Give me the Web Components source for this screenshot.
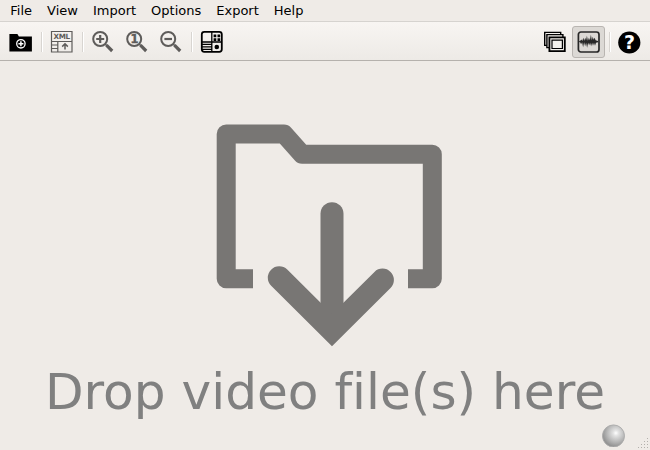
<!DOCTYPE html>
<html lang="en">
<head>
<meta charset="utf-8">
<title>Video drop window</title>
<style>
html,body{margin:0;width:650px;height:450px;overflow:hidden;background:#efebe7;font-family:"DejaVu Sans",sans-serif}
</style>
</head>
<body>
<app-window></app-window>
<script>
const define = (name, html) => customElements.define(name, class extends HTMLElement {
  constructor() {
    super();
    this.attachShadow({mode: 'open'}).innerHTML = html;
  }
});

const icons = {
  folder: `<path d="M.4 4h8l1.5 2.4h13v15.2H.4z" fill="#000"/><circle cx="11.9" cy="13.8" r="4.2" fill="none" stroke="#fff" stroke-width="1.3"/><path d="M11.9 11.3v5M9.4 13.8h5" stroke="#fff" stroke-width="1.5"/>`,
  xml: `<g fill="none" stroke="#5e5c5a" stroke-width="1.2"><path d="M1.5 1.5h20.5v20.5h-20.5zM1.5 11.5h20.5M7.8 11.5v10.5M1.5 15h6.3M1.5 18.5h6.3"/><path d="M15 19.5v-5.5M12.2 16.6l2.8-2.8 2.8 2.8" stroke-width="1.5"/></g><text x="11.8" y="9.3" text-anchor="middle" textLength="16.6" lengthAdjust="spacing" font-family="DejaVu Sans" font-weight="bold" font-size="7.2" fill="#5e5c5a">XML</text>`,
  lens: `<circle cx="9.2" cy="9" r="7" fill="none" stroke="#5e5c5a" stroke-width="2"/><path d="M14.1 14l2 2" stroke="#5e5c5a" stroke-width="1.6"/><path d="M15.4 15.2l5.8 5.8" stroke="#5e5c5a" stroke-width="3.2"/>`,
  panel: `<rect x="1.8" y="1.8" width="20" height="20" rx="2.5" fill="none" stroke="#000" stroke-width="1.8"/><path d="M11.8 2v20M2 12h20" stroke="#000" stroke-width="1.3"/><path d="M2 14.4h10M2 16.8h10M2 19.3h10" stroke="#000" stroke-width="1.2"/><path d="M13.6 4.6h2.7v2.7h-2.7zM17.5 4.6h2.7v2.7h-2.7zM13.6 8.3h2.7V11h-2.7zM17.5 8.3h2.7V11h-2.7z"/><circle cx="16.8" cy="17" r="2.3"/>`,
  stack: `<g fill="#f4f1ed" stroke="#000" stroke-width="1.4"><path d="M1.7 2.4h16v13h-16z"/><path d="M3.9 4.6h16v13h-16z"/><path d="M6.4 7.4h15.4v13.7H6.4z" stroke-width="1.8"/><path d="M9 10.1h10.4v8.4H9z" stroke-width="1.2"/></g>`,
  wave: `<rect x="1.4" y="2" width="20.6" height="20" rx="2.5" fill="none" stroke="#272727" stroke-width="1.7"/><path d="M2 11.5l1.5-1 1-1 .8 1.5 1-3.3.9 3 1-3 .9 2.5.8-4.5 1 5 1-3 1 2.5 1-5.5.9 5.5 1-3.5.8 3 1-2 1 2.5 2.4.8v1.2l-2 .6-1 3-1-3-1 3-.9-3-1 3.5-1-3.5-1 2.5-1-2.5-1 5-1-5-1 3.5-1-4-1 5-1-5-1 2-1-2-1.5-.3z" fill="#272727"/>`,
  help: `<circle cx="11.3" cy="12.5" r="11.1"/><text x="11.4" y="19.4" text-anchor="middle" font-family="DejaVu Sans" font-weight="bold" font-size="19" fill="#fff">?</text>`
};
const sign = {
  zoomin: `<path d="M9.2 5v8M5.2 9h8" stroke="#5e5c5a" stroke-width="2.2"/>`,
  zoomone: `<text x="9.4" y="13.2" text-anchor="middle" font-family="DejaVu Sans" font-weight="bold" font-size="11.5" fill="#5e5c5a" stroke="#5e5c5a" stroke-width=".4">1</text>`,
  zoomout: `<path d="M5.4 9h7.6" stroke="#5e5c5a" stroke-width="2.2"/>`
};
for (const k in sign) icons[k] = icons.lens + sign[k];

customElements.define('tool-button', class extends HTMLElement {
  connectedCallback() {
    this.attachShadow({mode: 'open'}).innerHTML = `<style>
      :host{display:flex;box-sizing:border-box;width:34px;height:34px;align-items:center;justify-content:center}
      :host([pressed]) div{background:#dcd9d5;border-color:#b9b5b1}
      div{box-sizing:border-box;width:33px;height:32px;border:1px solid transparent;border-radius:3px;display:flex;align-items:center;justify-content:center}
      :host([pressed]){justify-content:flex-start}
      svg{display:block;flex:none;width:24px;height:24px}
    </style><div><svg viewBox="0 0 24 24">${icons[this.getAttribute('icon')]}</svg></div>`;
  }
});
define('tool-separator', `<style>:host{display:block;width:7px;height:20px}i{display:block;width:1px;height:100%;margin-left:3px;background:#d8d5d1;box-shadow:1px 0 #fff}</style><i></i>`);
define('tool-bar', `<style>
  :host{display:flex;box-sizing:border-box;height:40px;padding:2px 3px 0 4px;align-items:center;border-top:1px solid #d6d3cf;border-bottom:1px solid #b5b1ad;background:linear-gradient(#f8f5f2,#edeae6)}
  .gap{flex:1}</style><slot></slot><div class="gap"></div><slot name="end"></slot>`);
define('menu-item', `<style>:host{display:block;font-size:13px;line-height:21px;color:#000}</style><slot></slot>`);
define('menu-bar', `<style>:host{display:flex;box-sizing:border-box;height:21px;padding-left:10.3px;gap:15px}</style><slot></slot>`);
define('drop-area', `<style>
  :host{display:flex;flex:1;flex-direction:column;align-items:center;position:relative}
  svg{display:block;width:260px;height:250px;margin:49px 0 0 10px}
  p{margin:0;font-size:50.15px;line-height:64px;color:#808080;white-space:nowrap;font-variant-ligatures:none}
  </style>
  <svg viewBox="200 110 260 250">
    <path d="M253 278.8H226.2V134H284L302 154.2H432.3V278.8H408" fill="none" stroke="#787674" stroke-width="19" stroke-linejoin="round"/>
    <path d="M332 213.7V320" stroke="#787674" stroke-width="23" stroke-linecap="round"/>
    <path d="M279.2 277.7L332 330.2L382.5 280" fill="none" stroke="#787674" stroke-width="22.8" stroke-linecap="round" stroke-linejoin="miter"/>
  </svg><p><slot></slot></p>`);
define('status-light', `<style>:host{display:block;width:23px;height:23px}svg{display:block}</style>
  <svg width="23" height="23" viewBox="0 0 23 23"><defs><radialGradient id="g" cx=".61" cy=".37" r=".68"><stop offset="0" stop-color="#fff"/><stop offset=".18" stop-color="#e3e3e3"/><stop offset=".55" stop-color="#bbb"/><stop offset="1" stop-color="#888"/></radialGradient></defs><circle cx="11.5" cy="11.9" r="11" fill="url(#g)" stroke="#aaa" stroke-width=".9"/></svg>`);
define('size-grip', `<style>:host{display:block;width:12px;height:12px}svg{display:block}</style>
  <svg width="12" height="12" fill="#b3b0ac" shape-rendering="crispEdges"><path d="M10 0h1v1h-1zM7 3h1v1H7zM10 3h1v1h-1zM4 6h1v1H4zM7 6h1v1H7zM10 6h1v1h-1zM1 9h1v1H1zM4 9h1v1H4zM7 9h1v1H7zM10 9h1v1h-1z"/></svg>`);
define('app-window', `<style>
  :host{display:flex;flex-direction:column;width:650px;height:450px;position:relative;background:#efebe7}
  .corner{position:absolute;right:1px;bottom:3px;display:flex;align-items:flex-end;gap:12px}
  size-grip{margin-bottom:-3px}
  </style>
  <menu-bar><menu-item>File</menu-item><menu-item>View</menu-item><menu-item>Import</menu-item><menu-item>Options</menu-item><menu-item>Export</menu-item><menu-item>Help</menu-item></menu-bar>
  <tool-bar>
    <tool-button icon="folder"></tool-button><tool-separator></tool-separator>
    <tool-button icon="xml"></tool-button><tool-separator></tool-separator>
    <tool-button icon="zoomin"></tool-button><tool-button icon="zoomone"></tool-button><tool-button icon="zoomout"></tool-button><tool-separator></tool-separator>
    <tool-button icon="panel"></tool-button>
    <tool-button slot="end" icon="stack"></tool-button><tool-button slot="end" icon="wave" pressed></tool-button><tool-separator slot="end"></tool-separator><tool-button slot="end" icon="help"></tool-button>
  </tool-bar>
  <drop-area>Drop video file(s) here</drop-area>
  <div class="corner"><status-light></status-light><size-grip></size-grip></div>`);
</script>
</body>
</html>
